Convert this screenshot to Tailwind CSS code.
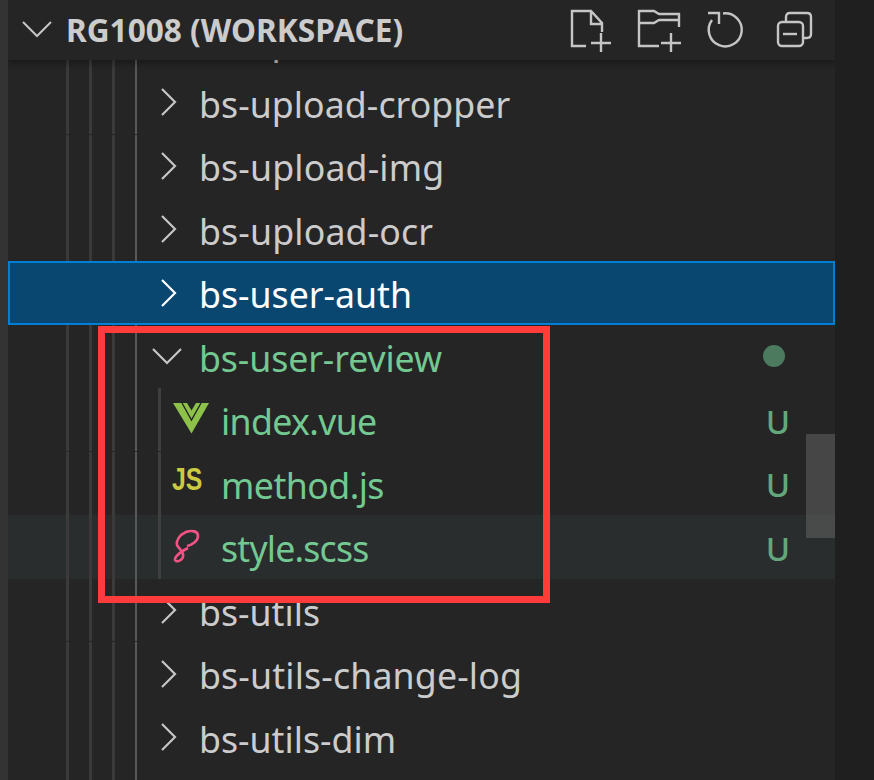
<!DOCTYPE html>
<html><head><meta charset="utf-8"><script src="https://cdn.jsdelivr.net/npm/@tailwindcss/browser@4"></script></head>
<body class="m-0">
<div class="relative flex w-[874px] h-[780px] overflow-hidden bg-[#1f1f1f] font-['Noto_Sans','Open_Sans',sans-serif]">
  <div class="w-[8px] bg-[#333333] shrink-0"></div>
  <div class="relative w-[827px] h-full bg-[#252526] flex flex-col shrink-0 overflow-hidden">
    <!-- header -->
    <div class="relative z-20 h-[60px] shrink-0 flex items-center bg-[#252526] shadow-[0_4px_6px_rgba(0,0,0,0.3)]">
      <svg class="ml-[13px] w-[32px] h-[20px]" viewBox="0 0 32 20" fill="none" stroke="#c5c5c5" stroke-width="2"><path d="M2 2 L16 16 L30 2"/></svg>
      <span class="ml-[13px] text-[31.6px] font-bold leading-none text-[#cccccc] whitespace-nowrap">RG1008 (WORKSPACE)</span>
      <div class="ml-auto mr-[18px] mt-[2px] flex gap-[24px] shrink-0">
        <svg class="w-[44px] h-[44px]" viewBox="0 0 44 44" fill="none" stroke="#c5c5c5" stroke-width="2.4"><path d="M17 37H3V2H22L33 14V23M22 2V15H33M22 34H42M32 24V43"/></svg>
        <svg class="w-[44px] h-[44px]" viewBox="0 0 44 44" fill="none" stroke="#c5c5c5" stroke-width="2.4"><path d="M22 37H2V2H17L22 5H42V18M2 14H17L22 11H42M24 34H44M34 24V43"/></svg>
        <svg class="w-[44px] h-[44px] -ml-[2px]" viewBox="0 0 44 44" fill="none" stroke="#c5c5c5" stroke-width="2.4"><path d="M20 4.5A16.5 16.5 0 1 1 9 11M5 4H16V15"/></svg>
        <svg class="w-[44px] h-[44px] ml-[2px]" viewBox="0 0 44 44" fill="none" stroke="#c5c5c5" stroke-width="2.4"><path d="M13 13V8Q13 4 17 4H34Q38 4 38 8V25Q38 29 34 29H30"/><rect x="5" y="13" width="25" height="24" rx="4"/><path d="M10 25H24"/></svg>
      </div>
    </div>
    <!-- tree -->
    <div class="flex-1 min-h-0 overflow-hidden">
    <div class="flex flex-col mt-[-53px] text-[35.7px] text-[#cccccc]">
      <div class="flex items-center h-[63.5px] pl-[191px] whitespace-nowrap"><span class="pt-[5px]">bs-upload</span></div>
      <div class="flex items-center h-[63.5px] pl-[152px] whitespace-nowrap"><svg class="w-[18px] h-[30px] mr-[21px]" viewBox="0 0 18 30" fill="none" stroke="#c5c5c5" stroke-width="2.2"><path d="M2 2 L15 15 L2 28"/></svg><span class="pt-[5px] tracking-[0.06px]">bs-upload-cropper</span></div>
      <div class="flex items-center h-[63.5px] pl-[152px] whitespace-nowrap"><svg class="w-[18px] h-[30px] mr-[21px]" viewBox="0 0 18 30" fill="none" stroke="#c5c5c5" stroke-width="2.2"><path d="M2 2 L15 15 L2 28"/></svg><span class="pt-[5px] tracking-[0.15px]">bs-upload-img</span></div>
      <div class="flex items-center h-[63.5px] pl-[152px] whitespace-nowrap"><svg class="w-[18px] h-[30px] mr-[21px]" viewBox="0 0 18 30" fill="none" stroke="#c5c5c5" stroke-width="2.2"><path d="M2 2 L15 15 L2 28"/></svg><span class="pt-[5px] tracking-[0.15px]">bs-upload-ocr</span></div>
      <div class="relative z-10 flex items-center h-[63.5px] pl-[150px] whitespace-nowrap bg-[#094771] border-2 border-[#007fd4] text-white box-border"><svg class="w-[18px] h-[30px] mr-[21px]" viewBox="0 0 18 30" fill="none" stroke="#ffffff" stroke-width="2.2"><path d="M2 2 L15 15 L2 28"/></svg><span class="pt-[5px]">bs-user-auth</span></div>
      <div class="flex items-center h-[63.5px] pl-[144px] whitespace-nowrap text-[#73c991]"><svg class="w-[30px] h-[18px] mr-[17px] shrink-0" viewBox="0 0 30 18" fill="none" stroke="#c5c5c5" stroke-width="2.2"><path d="M1 2 L15 16 L29 2"/></svg><span class="pt-[5px] tracking-[-0.1px]">bs-user-review</span><span class="ml-auto mr-[50px] w-[22px] h-[22px] rounded-full bg-[#4b7a5e]"></span></div>
      <div class="flex items-center h-[63.5px] pl-[165px] whitespace-nowrap text-[#73c991]"><svg class="w-[37px] h-[33px] mr-[11px] shrink-0 -mt-[2px]" viewBox="0 0 37 33"><path d="M0 1H36L18.5 31.5Z" fill="#8dc149"/><path d="M9 1L18.5 18L28 1" fill="none" stroke="#252526" stroke-width="1.4"/><path d="M14 1L18.5 8.5L23 1Z" fill="#252526"/></svg><span class="pt-[5px] tracking-[-0.65px]">index.vue</span><span class="ml-auto mr-[45px] pt-[3px] text-[#62a87c] text-[33px] font-medium">U</span></div>
      <div class="flex items-center h-[63.5px] pl-[164px] whitespace-nowrap text-[#73c991]"><span class="w-[38px] mr-[11px] shrink-0 inline-block origin-left scale-x-[0.8] text-[#cbcb41] text-[31px] font-bold leading-none -mt-[8px] font-['Liberation_Sans',sans-serif]">JS</span><span class="pt-[5px] tracking-[-0.55px]">method.js</span><span class="ml-auto mr-[45px] pt-[3px] text-[#62a87c] text-[33px] font-medium">U</span></div>
      <div class="flex items-center h-[63.5px] pl-[165px] whitespace-nowrap text-[#73c991] bg-[#2a2d2e]"><svg class="w-[30px] h-[34px] mr-[18px] shrink-0 -mt-[6px] overflow-visible" viewBox="0 0 30 34" fill="none" stroke="#f55385" stroke-width="2.6"><path d="M14 19C19 18 25 14 25 9C25 4 19 3 13 5C6 8 3 14 4 18C5 21 9 23 10 27C11 32 6 35 3 34C0 33 3 27 15 21"/></svg><span class="pt-[5px] tracking-[-0.8px]">style.scss</span><span class="ml-auto mr-[45px] pt-[3px] text-[#62a87c] text-[33px] font-medium">U</span></div>
      <div class="flex items-center h-[63.5px] pl-[152px] whitespace-nowrap"><svg class="w-[18px] h-[30px] mr-[21px]" viewBox="0 0 18 30" fill="none" stroke="#c5c5c5" stroke-width="2.2"><path d="M2 2 L15 15 L2 28"/></svg><span class="pt-[5px]">bs-utils</span></div>
      <div class="flex items-center h-[63.5px] pl-[152px] whitespace-nowrap"><svg class="w-[18px] h-[30px] mr-[21px]" viewBox="0 0 18 30" fill="none" stroke="#c5c5c5" stroke-width="2.2"><path d="M2 2 L15 15 L2 28"/></svg><span class="pt-[5px] tracking-[0.16px]">bs-utils-change-log</span></div>
      <div class="flex items-center h-[63.5px] pl-[152px] whitespace-nowrap"><svg class="w-[18px] h-[30px] mr-[21px]" viewBox="0 0 18 30" fill="none" stroke="#c5c5c5" stroke-width="2.2"><path d="M2 2 L15 15 L2 28"/></svg><span class="pt-[5px]">bs-utils-dim</span></div>
    </div>
    </div>
    <!-- indent guides -->
    <div class="absolute z-[5] left-[58px] top-[60px] bottom-0 w-[3px] bg-[#3a3a3a]"></div>
    <div class="absolute z-[5] left-[81px] top-[60px] bottom-0 w-[3px] bg-[#3a3a3a]"></div>
    <div class="absolute z-[5] left-[104px] top-[60px] bottom-0 w-[3px] bg-[#3a3a3a]"></div>
    <div class="absolute z-[5] left-[127px] top-[60px] bottom-0 w-[2px] bg-[#585858]"></div>
    <div class="absolute z-[5] left-[150px] top-[388px] h-[191px] w-[3px] bg-[#3f3f3f]"></div>
    <!-- row seams across the guides -->
    <div class="absolute z-[5] left-[58px] top-[134px] w-[72px] h-px bg-[#252526]"></div>
    <div class="absolute z-[5] left-[58px] top-[451px] w-[95px] h-px bg-[#252526]"></div>
    <div class="absolute z-[5] left-[58px] top-[641px] w-[72px] h-px bg-[#252526]"></div>
    <!-- scrollbar -->
    <div class="absolute z-[6] right-0 top-[434px] w-[29px] h-[104px] bg-[rgba(121,121,121,0.4)]"></div>
  </div>
  <!-- red annotation -->
  <div class="absolute z-30 left-[98px] top-[326px] w-[452px] h-[277px] border-[7px] border-[#ff3b3b]"></div>
</div>
</body></html>
